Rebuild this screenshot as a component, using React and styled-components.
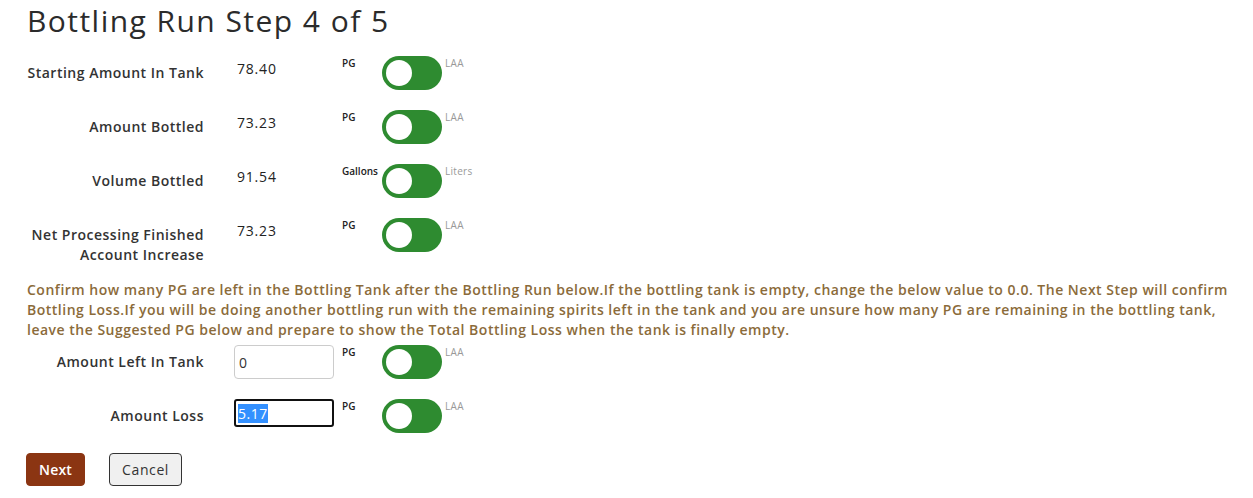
import React, { useEffect, useRef, useState } from 'react';
import styled, { createGlobalStyle } from 'styled-components';

const GlobalStyle = createGlobalStyle`
	body {
		margin: 0;
		background: #fff;
		font-family: 'Open Sans', 'Noto Sans', sans-serif;
		color: #333;
	}
`;

const Page = styled.div`
	padding: 0 15px 0 27px;
`;

const Title = styled.h1`
	margin: 0;
	padding-top: 2px;
	font-size: 30px;
	font-weight: 400;
	line-height: 38px;
	color: #2b2b2b;
	letter-spacing: 1.45px;
`;

const Rows = styled.div`
	display: flex;
	flex-direction: column;
	gap: 20px;
	margin-top: ${(p) => p.$top || 0}px;
`;

const Row = styled.div`
	display: flex;
	align-items: flex-start;
`;

const Label = styled.div`
	width: 177px;
	padding-top: 7px;
	text-align: right;
	font-size: 14px;
	font-weight: 600;
	line-height: 20px;
	letter-spacing: 0.5px;
	color: #333;
`;

const ValueCell = styled.div`
	box-sizing: border-box;
	width: 108px;
	margin-left: 30px;
	padding: 3px 0 0 3px;
	font-size: 14px;
	line-height: 20px;
	letter-spacing: 0.8px;
	color: #222;
`;

const InputCell = styled.div`
	width: 108px;
	margin-left: 30px;
`;

const Field = styled.input`
	box-sizing: border-box;
	width: 100px;
	height: ${(p) => (p.$compact ? 28 : 34)}px;
	padding: 0 ${(p) => (p.$compact ? 2 : 4)}px;
	font-family: inherit;
	font-size: 14px;
	letter-spacing: 0.5px;
	color: #333;
	border: 1px solid #ccc;
	border-radius: 4px;
	outline: none;
	background: #fff;

	&:focus {
		border: 2px solid #111;
		border-radius: 3px;
	}

	&::selection {
		background: #3390ff;
		color: #fff;
	}
`;

const Unit = styled.div`
	width: 40px;
	padding-top: 1px;
	font-size: 10px;
	font-weight: 600;
	line-height: 12px;
	color: #222;
	white-space: nowrap;
`;

const AltUnit = styled(Unit)`
	width: auto;
	margin-left: 3px;
	font-weight: 400;
	letter-spacing: 0.3px;
	color: #999;
`;

const Track = styled.button`
	position: relative;
	width: 60px;
	height: 34px;
	padding: 0;
	border: none;
	border-radius: 17px;
	background: #2e8b30;
	cursor: pointer;
	flex-shrink: 0;

	&::after {
		content: '';
		position: absolute;
		top: 4px;
		left: ${(p) => (p.$on ? 30 : 4)}px;
		width: 26px;
		height: 26px;
		border-radius: 50%;
		background: #fff;
		transition: left 0.2s;
	}
`;

const Note = styled.p`
	margin: 15px 0 5px;
	font-size: 14px;
	font-weight: 600;
	line-height: 20px;
	letter-spacing: 0.5px;
	color: #8b6b3a;
`;

const Actions = styled.div`
	display: flex;
	gap: 24px;
	margin-top: 20px;
	margin-left: -1px;
`;

const Button = styled.button`
	height: 33px;
	padding: 0 12px;
	font-family: inherit;
	font-size: 14px;
	font-weight: ${(p) => (p.$primary ? 600 : 400)};
	letter-spacing: ${(p) => (p.$primary ? 0.2 : 0.6)}px;
	color: ${(p) => (p.$primary ? '#fff' : '#333')};
	background: ${(p) => (p.$primary ? '#8b3512' : '#f0f0f0')};
	border: 1px solid ${(p) => (p.$primary ? '#8b3512' : '#333')};
	border-radius: 4px;
	cursor: pointer;
`;

const Toggle = ({ left, right }) => {
	const [on, setOn] = useState(false);
	return (
		<>
			<Unit>{left}</Unit>
			<Track $on={on} onClick={() => setOn(!on)} aria-label={`${left} / ${right}`} />
			<AltUnit>{right}</AltUnit>
		</>
	);
};

const summary = [
	{ label: 'Starting Amount In Tank', value: '78.40', units: ['PG', 'LAA'] },
	{ label: 'Amount Bottled', value: '73.23', units: ['PG', 'LAA'] },
	{ label: 'Volume Bottled', value: '91.54', units: ['Gallons', 'Liters'] },
	{ label: 'Net Processing Finished Account Increase', value: '73.23', units: ['PG', 'LAA'] }
];

const App = () => {
	const [left, setLeft] = useState('0');
	const [loss, setLoss] = useState('5.17');
	const lossRef = useRef(null);

	// the loss field opens focused with its suggested value selected
	useEffect(() => {
		if (lossRef.current) {
			lossRef.current.focus();
			lossRef.current.select();
		}
	}, []);

	return (
		<Page>
			<GlobalStyle />
			<Title>Bottling Run Step 4 of 5</Title>
			<Rows $top={16}>
				{summary.map((row) => (
					<Row key={row.label}>
						<Label>{row.label}</Label>
						<ValueCell>{row.value}</ValueCell>
						<Toggle left={row.units[0]} right={row.units[1]} />
					</Row>
				))}
			</Rows>
			<Note>
				Confirm how many PG are left in the Bottling Tank after the Bottling Run below.If the bottling tank is
				empty, change the below value to 0.0. The Next Step will confirm Bottling Loss.If you will be doing
				another bottling run with the remaining spirits left in the tank and you are unsure how many PG are
				remaining in the bottling tank, leave the Suggested PG below and prepare to show the Total Bottling Loss
				when the tank is finally empty.
			</Note>
			<Rows>
				<Row>
					<Label>Amount Left In Tank</Label>
					<InputCell>
						<Field value={left} onChange={(e) => setLeft(e.target.value)} />
					</InputCell>
					<Toggle left="PG" right="LAA" />
				</Row>
				<Row>
					<Label>Amount Loss</Label>
					<InputCell>
						<Field ref={lossRef} $compact value={loss} onChange={(e) => setLoss(e.target.value)} />
					</InputCell>
					<Toggle left="PG" right="LAA" />
				</Row>
			</Rows>
			<Actions>
				<Button $primary>Next</Button>
				<Button>Cancel</Button>
			</Actions>
		</Page>
	);
};

export default App;
